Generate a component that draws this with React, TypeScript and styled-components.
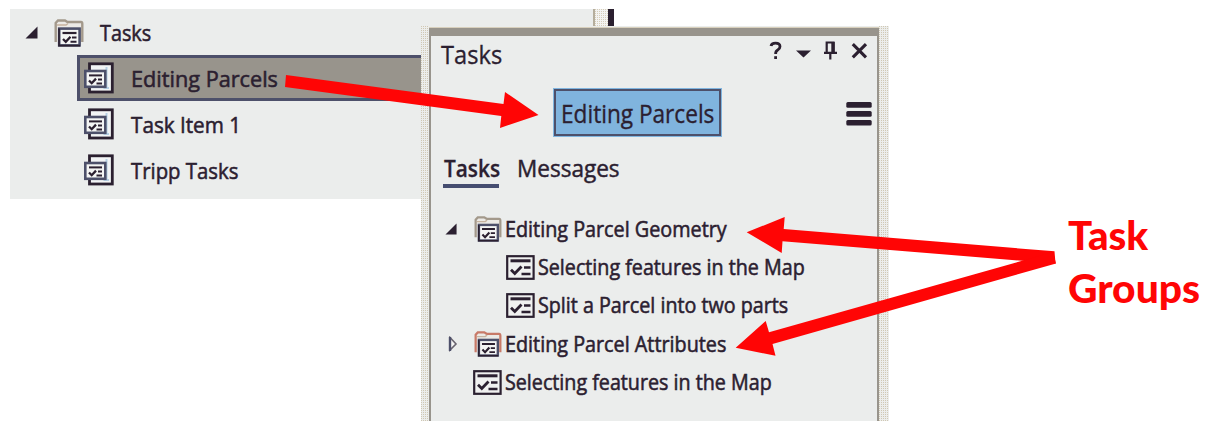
import React from 'react';
import styled, { createGlobalStyle } from 'styled-components';

const ink = '#2b2030';
const panel = '#ebedec';
const taupe = '#98948c';
const slate = '#4d506a';

const GlobalStyle = createGlobalStyle`
  body { margin: 0; background: #fff; }
  * { box-sizing: border-box; }
`;

const Page = styled.main`
  width: 1215px;
  height: 432px;
  display: grid;
  overflow: hidden;
  position: relative;
  background: #fff;
  font-family: 'Open Sans', 'Noto Sans', sans-serif;
  color: ${ink};
  > * { grid-area: 1 / 1; }
`;

const Label = styled.span<{ $size: number; $scale?: number; $weight?: number; $stroke?: number }>`
  display: inline-block;
  white-space: nowrap;
  font-size: ${(p) => p.$size}px;
  font-weight: ${(p) => p.$weight ?? 500};
  line-height: 1.2;
  -webkit-text-stroke: ${(p) => p.$stroke ?? 0.55}px currentColor;
  transform: scaleX(${(p) => p.$scale ?? 1});
  transform-origin: left center;
`;

const Catalog = styled.section`
  margin: 9px 0 0 10px;
  width: 604px;
  height: 190px;
  display: flex;
`;

const CatalogTree = styled.div`
  width: 583px;
  padding-top: 1px;
  background: ${panel};
`;

const CatalogEdge = styled.div`
  width: 21px;
  height: 20px;
  border-left: 2px solid #b5ae9d;
  border-right: 6px solid ${ink};
  background: conic-gradient(#f3f3f1 75%, #d6cdba 0) 0 0 / 2px 2px;
`;

const CatalogRoot = styled.div`
  height: 45px;
  display: flex;
  align-items: center;
  padding-left: 15px;
  svg + svg { margin: 1px 0 0 16px; }
  span { margin-left: 16px; }
`;

const CatalogItem = styled.div<{ $selected?: boolean }>`
  height: 46px;
  margin-left: 67px;
  padding-left: ${(p) => (p.$selected ? 4 : 7)}px;
  display: flex;
  align-items: center;
  gap: 17px;
  border: ${(p) => (p.$selected ? `3px solid ${slate}` : '0')};
  background: ${(p) => (p.$selected ? taupe : 'transparent')};
`;

const Strip = styled.div`
  background: conic-gradient(#ecedeb 75%, #d0c8b4 0) 0 0 / 2px 2px;
`;

const Pane = styled.section`
  margin: 26px 0 0 421px;
  width: 468px;
  height: 395px;
  display: grid;
  grid-template-columns: 8px 450px 10px;
  background: ${panel};
`;

const PaneBody = styled.div`
  margin-top: 2px;
  border: 2px solid ${taupe};
  border-top-width: 8px;
  border-bottom: 0;
  box-shadow: 0 -1px #d8d0bd;
`;

const TitleBar = styled.header`
  height: 40px;
  display: flex;
  align-items: flex-start;
  justify-content: space-between;
  padding: 3px 9px 0 10px;
`;

const WindowTools = styled.div`
  display: flex;
`;

const ItemBar = styled.div`
  height: 75px;
  display: flex;
  justify-content: space-between;
  align-items: flex-start;
  padding: 13px 4px 0 123px;
  svg { margin-top: 13px; }
`;

const ItemButton = styled.button`
  width: 167px;
  height: 47px;
  padding: 1px 0 0 5px;
  border: 2px solid ${slate};
  box-shadow: 0 0 0 1px #80b5df;
  border-radius: 0;
  background: #80b4de;
  color: ${ink};
  font-family: inherit;
  text-align: left;
`;

const Tabs = styled.nav`
  display: flex;
  gap: 17px;
  padding-left: 12px;
  height: 59px;
`;

const Tab = styled.div<{ $active?: boolean; $width: number }>`
  width: ${(p) => p.$width}px;
  height: 37px;
  padding: 4px 0 0 1px;
  border-bottom: ${(p) => (p.$active ? `4px solid #454d70` : '0')};
`;

const TaskRow = styled.div<{ $indent: number }>`
  height: 38.4px;
  display: flex;
  align-items: center;
  gap: 3px;
  padding-left: ${(p) => p.$indent}px;
`;

const Toggle = styled.span`
  width: 26px;
  height: 20px;
  flex: none;
  display: flex;
  align-items: center;
`;

const Callout = styled.aside`
  margin: 209px 0 0 1068px;
  display: flex;
  flex-direction: column;
  color: #ff0505;
  font-family: Lato, sans-serif;
  span { line-height: 53px; }
`;

const Arrows = styled.svg`
  z-index: 2;
  pointer-events: none;
`;

const Expanded = ({ size = 13 }: { size?: number }) => (
  <svg width={size} height={size} viewBox="0 0 13 13">
    <path d="M12.5 0.5V12.5H0.5Z" fill={ink} />
  </svg>
);

const Collapsed = () => (
  <svg width="14" height="16" viewBox="0 0 14 16">
    <path d="M5 1.5V14L11 8Z" fill="#f6f6f4" stroke="#6a6570" strokeWidth="1.6" />
    <path d="M5 1V15" stroke={slate} strokeWidth="2.4" />
  </svg>
);

const FolderIcon = ({ w, h, edge = '#a3998b' }: { w: number; h: number; edge?: string }) => (
  <svg width={w} height={h} viewBox="0 0 30 28">
    <path d="M1.7 23V4L4 1.5H11L13.5 3H27Q28.3 3 28.3 5V23" fill="#eceae6" stroke={edge} strokeWidth="2.4" />
    <path d="M3 6H12L14 4.5" fill="none" stroke="#c6b39f" strokeWidth="1.5" />
    <rect x="5.2" y="9.6" width="20.4" height="16.8" fill="#f4f5f4" stroke={slate} strokeWidth="2.6" />
    <path d="M5 9.6V26.6H26" fill="none" stroke={ink} strokeWidth="1.6" />
    <path d="M8.5 14H22.5" stroke={ink} strokeWidth="2.2" />
    <path d="M9 20L11.8 22.8L16.5 17.8" fill="none" stroke={ink} strokeWidth="2.3" />
    <path d="M18 18.5H22.5M16.5 22.8H22.5" stroke={ink} strokeWidth="2" />
  </svg>
);

const ItemIcon = () => (
  <svg width="30" height="32" viewBox="0 0 30 32">
    <rect x="5.5" y="1.8" width="22.8" height="28.2" fill="#f2f4f5" stroke={ink} strokeWidth="2.8" />
    <path d="M22.5 5V27M19.5 26H25" fill="none" stroke="#b5cfe4" strokeWidth="2" />
    <rect x="1.3" y="9" width="20" height="15.8" fill="#f4f5f4" stroke={slate} strokeWidth="2.6" />
    <path d="M5 13.4H18" stroke={ink} strokeWidth="2" />
    <path d="M5 18.5L7.7 21.2L12 16.6" fill="none" stroke={ink} strokeWidth="2.3" />
    <path d="M14 17.4H18M12.5 21.4H18" stroke={ink} strokeWidth="2" />
  </svg>
);

const TaskIcon = () => (
  <svg width="29" height="25" viewBox="0 0 29 25">
    <rect x="1.2" y="1.2" width="26.4" height="22.6" fill="#f0f1f0" stroke={ink} strokeWidth="2.2" />
    <path d="M4.5 5.8H24.5" stroke={ink} strokeWidth="3" />
    <path d="M5 14.8L8.8 18.5L15.5 11.5" fill="none" stroke={ink} strokeWidth="2.8" />
    <path d="M18 12.5H24.5M15.5 19H24.5" stroke={ink} strokeWidth="2.3" />
  </svg>
);

const ToolIcons = () => (
  <svg width="100" height="22" viewBox="768 39 100 22" fill="none" stroke={ink}>
    <path d="M771 46Q771.5 43.2 775.5 43.2Q780 43.2 780 46.5Q780 48.7 777.7 50Q775.6 51.2 775.6 54" strokeWidth="2.8" />
    <path d="M774.2 56.2H777V59H774.2Z" fill={ink} stroke="none" />
    <path d="M796 50.5H811L803.5 57.5Z" fill={ink} stroke="none" />
    <path d="M826.7 52V42.5H833.5V52M824 52.8H837M830.3 53V59.5" strokeWidth="2.2" />
    <path d="M833 42V52" strokeWidth="3.4" />
    <path d="M852.8 44.2L866 57.4M866 44.2L852.8 57.4" strokeWidth="3.1" />
  </svg>
);

const Menu = () => (
  <svg width="27" height="24" viewBox="0 0 27 24" fill={ink}>
    <rect x="0.3" y="0.1" width="25.4" height="5.7" rx="1.5" />
    <rect x="0.3" y="9" width="25.4" height="5.7" rx="1.5" />
    <rect x="0.3" y="17.9" width="25.4" height="5.7" rx="1.5" />
  </svg>
);

const catalogItems = [
  { name: 'Editing Parcels', selected: true, scale: 0.985 },
  { name: 'Task Item 1', scale: 0.94 },
  { name: 'Tripp Tasks', scale: 0.925 },
];

export default function App() {
  return (
    <Page>
      <GlobalStyle />
      <Catalog>
        <CatalogTree>
          <CatalogRoot>
            <Expanded />
            <FolderIcon w={30} h={28} />
            <Label $size={22} $scale={0.9}>Tasks</Label>
          </CatalogRoot>
          {catalogItems.map((item) => (
            <CatalogItem key={item.name} $selected={item.selected}>
              <ItemIcon />
              <Label $size={22} $scale={item.scale}>{item.name}</Label>
            </CatalogItem>
          ))}
        </CatalogTree>
        <CatalogEdge />
      </Catalog>

      <Pane>
        <Strip />
        <PaneBody>
          <TitleBar>
            <Label $size={26} $scale={0.91} $weight={400} $stroke={0.3}>Tasks</Label>
            <WindowTools><ToolIcons /></WindowTools>
          </TitleBar>
          <ItemBar>
            <ItemButton>
              <Label $size={25} $scale={0.905} $weight={400} $stroke={0.35}>Editing Parcels</Label>
            </ItemButton>
            <Menu />
          </ItemBar>
          <Tabs>
            <Tab $active $width={56}><Label $size={23} $scale={0.905} $weight={600} $stroke={0.3}>Tasks</Label></Tab>
            <Tab $width={110}><Label $size={23} $scale={0.98} $stroke={0.45}>Messages</Label></Tab>
          </Tabs>
          <TaskRow $indent={14}>
            <Toggle><Expanded size={12} /></Toggle>
            <FolderIcon w={28} h={26} />
            <Label $size={21} $scale={0.942}>Editing Parcel Geometry</Label>
          </TaskRow>
          <TaskRow $indent={75}>
            <TaskIcon />
            <Label $size={21} $scale={0.938}>Selecting features in the Map</Label>
          </TaskRow>
          <TaskRow $indent={75}>
            <TaskIcon />
            <Label $size={21} $scale={0.938}>Split a Parcel into two parts</Label>
          </TaskRow>
          <TaskRow $indent={14}>
            <Toggle><Collapsed /></Toggle>
            <FolderIcon w={28} h={26} edge="#c87a68" />
            <Label $size={21} $scale={0.942}>Editing Parcel Attributes</Label>
          </TaskRow>
          <TaskRow $indent={42}>
            <TaskIcon />
            <Label $size={21} $scale={0.938}>Selecting features in the Map</Label>
          </TaskRow>
        </PaneBody>
        <Strip />
      </Pane>

      <Callout>
        <Label $size={39} $scale={1.03} $weight={900} $stroke={0}>Task</Label>
        <Label $size={39} $scale={1.045} $weight={900} $stroke={0}>Groups</Label>
      </Callout>

      <Arrows width="1215" height="432" viewBox="0 0 1215 432" fill="#ff0505">
        <path d="M286 75L503.5 104L505 92L538.5 115L500 128L501.3 116L285 87Z" />
        <path d="M746.7 232.3L784.7 217L783.7 229L1054.5 251.3L1055.5 263.5L782.5 241.2L781.7 253Z" />
        <path d="M735.7 347.7L765.7 321L769 332.3L1053 252L1056 263.5L772.5 344L775.5 355.7Z" />
      </Arrows>
    </Page>
  );
}
